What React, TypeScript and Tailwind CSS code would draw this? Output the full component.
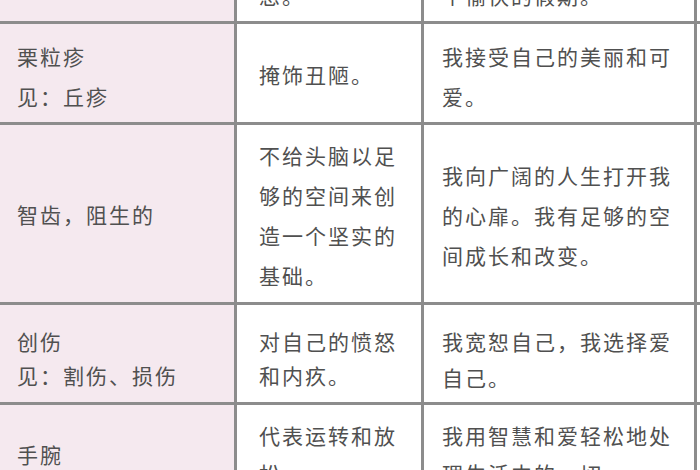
const font = { fontFamily: '"Noto Sans CJK SC", "Noto Sans", sans-serif' };

const App = () => {
  return (
    <div className="w-[700px] h-[470px] overflow-hidden bg-white text-[21px] tracking-[2px] text-[#505050]" style={font}>
      {/* top row, mostly scrolled out of view */}
      <div className="grid grid-cols-[237px_187px_273px] h-[24px] border-b-[3px] border-[#8c8c8c]">
        <div className="bg-[#f5e9ef] border-r-[3px] border-[#8c8c8c]" />
        <div className="border-r-[3px] border-[#8c8c8c] overflow-hidden flex flex-col justify-end pl-[22px] pb-[6px] leading-[40px] whitespace-nowrap">
          <div>渴望有时间休</div>
          <div>息。</div>
        </div>
        <div className="border-r-[3px] border-[#8c8c8c] overflow-hidden flex flex-col justify-end pl-[18px] pb-[6px] leading-[40px] whitespace-nowrap">
          <div>我允许自己享受一</div>
          <div>个愉快的假期。</div>
        </div>
      </div>

      {/* 栗粒疹 */}
      <div className="grid grid-cols-[237px_187px_273px] h-[101px] border-b-[3px] border-[#8c8c8c]">
        <div className="bg-[#f5e9ef] border-r-[3px] border-[#8c8c8c] pl-[17px] pt-[12px] leading-[40px] whitespace-nowrap">
          栗粒疹<br />见：丘疹
        </div>
        <div className="border-r-[3px] border-[#8c8c8c] pl-[22px] pt-[30px] leading-[40px] whitespace-nowrap">
          掩饰丑陋。
        </div>
        <div className="border-r-[3px] border-[#8c8c8c] pl-[18px] pt-[12px] leading-[40px] whitespace-nowrap">
          我接受自己的美丽和可<br />爱。
        </div>
      </div>

      {/* 智齿，阻生的 */}
      <div className="grid grid-cols-[237px_187px_273px] h-[180px] border-b-[3px] border-[#8c8c8c]">
        <div className="bg-[#f5e9ef] border-r-[3px] border-[#8c8c8c] pl-[17px] pt-[69px] leading-[40px] whitespace-nowrap">
          智齿，阻生的
        </div>
        <div className="border-r-[3px] border-[#8c8c8c] pl-[22px] pt-[10px] leading-[40px] whitespace-nowrap">
          不给头脑以足<br />够的空间来创<br />造一个坚实的<br />基础。
        </div>
        <div className="border-r-[3px] border-[#8c8c8c] pl-[18px] pt-[30px] leading-[40px] whitespace-nowrap">
          我向广阔的人生打开我<br />的心扉。我有足够的空<br />间成长和改变。
        </div>
      </div>

      {/* 创伤 */}
      <div className="grid grid-cols-[237px_187px_273px] h-[100px] border-b-[3px] border-[#8c8c8c]">
        <div className="bg-[#f5e9ef] border-r-[3px] border-[#8c8c8c] pl-[17px] pt-[19px] leading-[34px] whitespace-nowrap">
          创伤<br />见：割伤、损伤
        </div>
        <div className="border-r-[3px] border-[#8c8c8c] pl-[22px] pt-[19px] leading-[34px] whitespace-nowrap">
          对自己的愤怒<br />和内疚。
        </div>
        <div className="border-r-[3px] border-[#8c8c8c] pl-[18px] pt-[18px] leading-[36px] whitespace-nowrap">
          我宽恕自己，我选择爱<br />自己。
        </div>
      </div>

      {/* 手腕 */}
      <div className="grid grid-cols-[237px_187px_273px] h-[140px] border-b-[3px] border-[#8c8c8c]">
        <div className="bg-[#f5e9ef] border-r-[3px] border-[#8c8c8c] pl-[17px] pt-[29px] leading-[40px] whitespace-nowrap">
          手腕
        </div>
        <div className="border-r-[3px] border-[#8c8c8c] pl-[22px] pt-[11px] leading-[38px] whitespace-nowrap">
          代表运转和放<br />松。
        </div>
        <div className="border-r-[3px] border-[#8c8c8c] pl-[18px] pt-[11px] leading-[38px] whitespace-nowrap">
          我用智慧和爱轻松地处<br />理生活中的一切。
        </div>
      </div>
    </div>
  );
};

export default App;
